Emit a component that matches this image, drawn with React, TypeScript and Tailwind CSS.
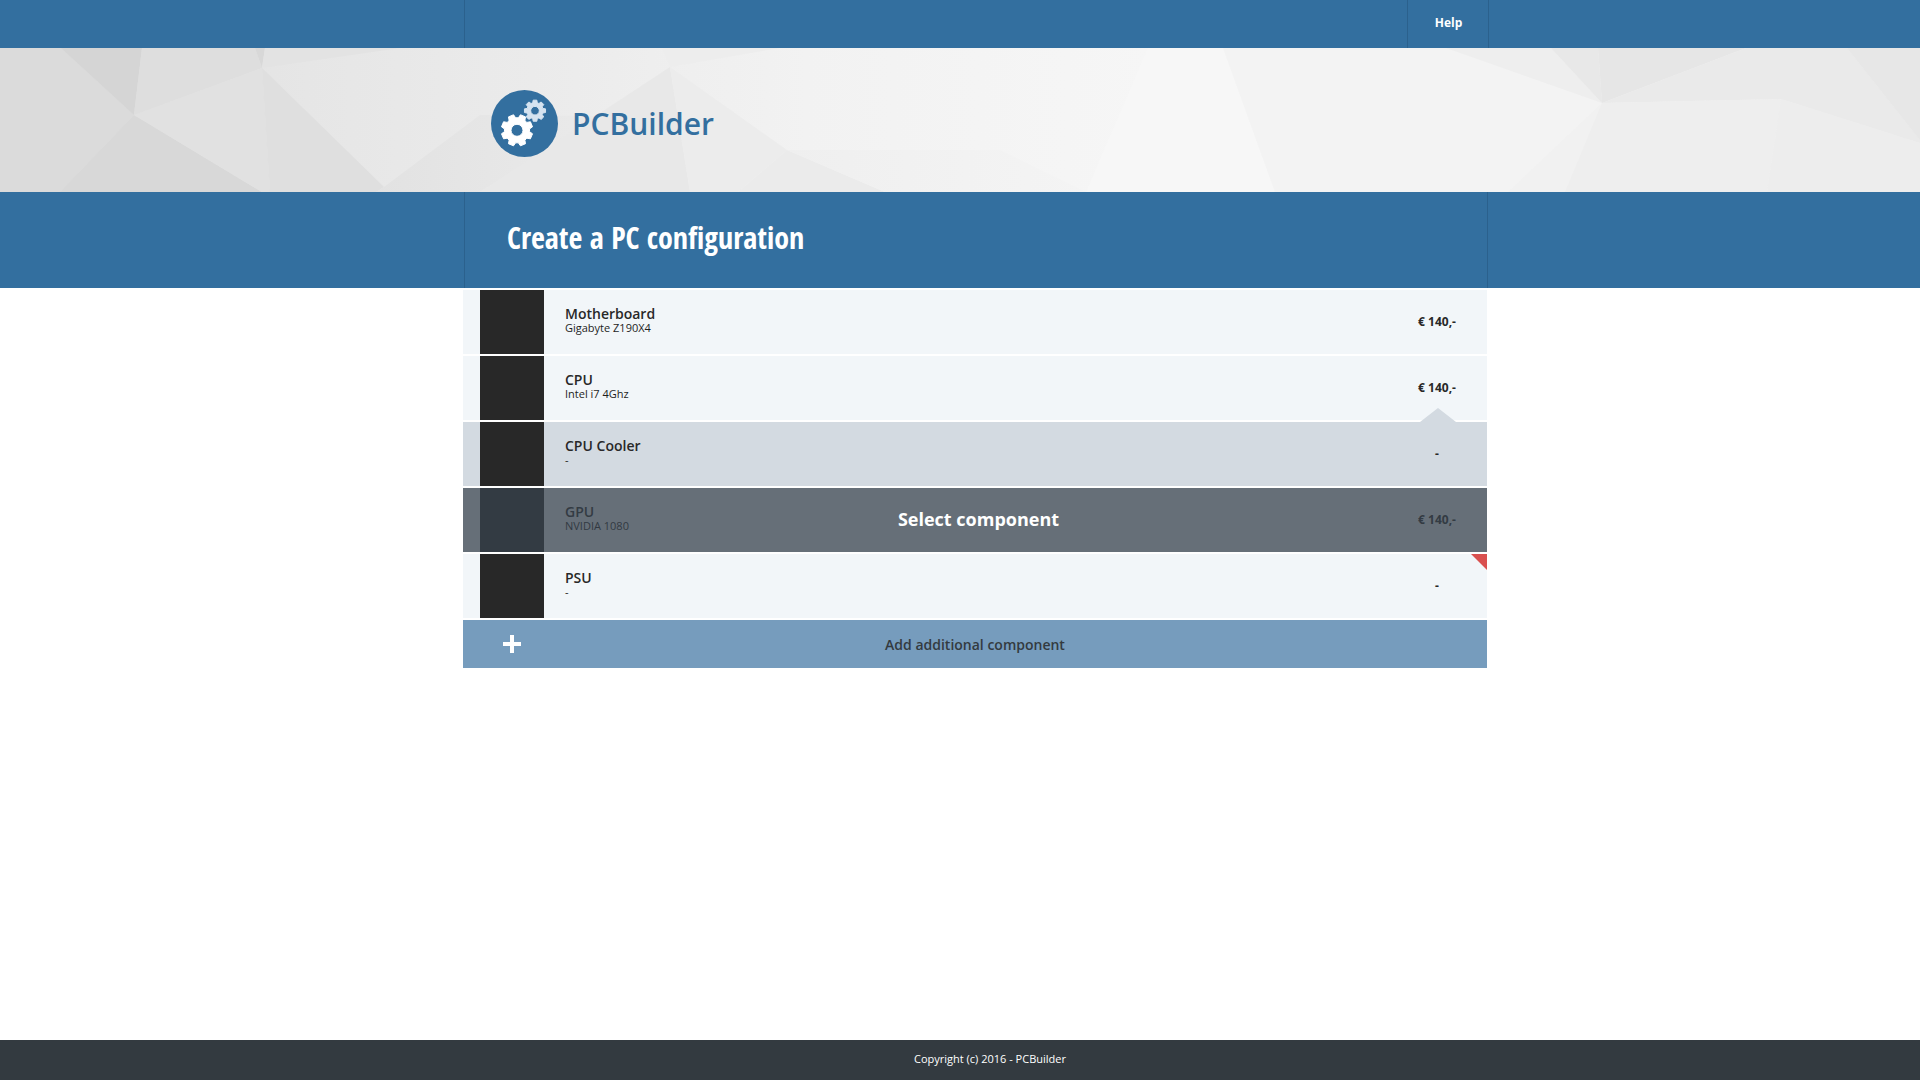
import React from "react";

type Facet = [points: string, fill: string];

const facets: Facet[] = [
  ["0,0 61,0 134,67 60,144 0,144", "#dbdbdb"],
  ["61,0 142,0 134,67", "#d5d5d5"],
  ["134,67 262,144 60,144", "#d8d8d8"],
  ["142,0 134,67 262,20 255,0", "#dedede"],
  ["134,67 262,20 270,144 262,144", "#e1e1e1"],
  ["262,20 384,139 376,144 270,144", "#dfdfdf"],
  ["255,0 265,0 262,20", "#d8d8d8"],
  ["265,0 262,20 400,0", "#e3e3e3"],
  ["384,139 480,67 600,68 480,144 376,144", "url(#slope)"],
  ["670,19 690,144 480,144", "#e8e8e8"],
  ["670,19 787,102 738,144 690,144", "#ececec"],
  ["662,0 670,19 780,0", "#ededed"],
  ["787,102 885,144 738,144", "#ebebeb"],
  ["787,102 1000,102 1086,144 885,144", "url(#floor)"],
  ["1148,0 1223,0 1275,144 1086,144", "#f7f7f7"],
  ["1223,0 1446,0 1602,55 1508,144 1275,144", "#f3f3f3"],
  ["1446,0 1551,0 1602,55", "#eeeeee"],
  ["1551,0 1598,0 1602,55", "#e8e8e8"],
  ["1598,0 1746,0 1602,55", "#e6e6e6"],
  ["1746,0 1847,0 1920,92 1920,95 1781,51 1602,55", "#eaeaea"],
  ["1847,0 1920,0 1920,92", "#e7e7e7"],
  ["1602,55 1565,144 1508,144", "#f1f1f1"],
  ["1602,55 1781,51 1767,144 1565,144", "#eeeeee"],
  ["1781,51 1920,95 1920,144 1767,144", "#ededed"],
];

function gearPath(cx: number, cy: number, outer: number, inner: number, hole: number, teeth: number, turn: number) {
  const step = (Math.PI * 2) / teeth;
  const at = (r: number, a: number) => `${(cx + r * Math.sin(a)).toFixed(2)} ${(cy - r * Math.cos(a)).toFixed(2)}`;
  const points: string[] = [];
  for (let i = 0; i < teeth; i++) {
    const a = i * step + turn;
    points.push(at(inner, a - step * 0.36), at(outer, a - step * 0.22), at(outer, a + step * 0.22), at(inner, a + step * 0.36));
  }
  return `M${points.join("L")}ZM${cx - hole} ${cy}a${hole} ${hole} 0 1 0 ${hole * 2} 0a${hole} ${hole} 0 1 0 ${-hole * 2} 0Z`;
}

function Logo() {
  return (
    <svg viewBox="0 0 67 67" className="size-[67px]" aria-hidden="true">
      <circle cx="33.5" cy="33.5" r="33.5" fill="#336f9f" />
      <g fillRule="evenodd" strokeLinejoin="round" strokeWidth="1">
        <path d={gearPath(26, 40.3, 15.9, 12.6, 6, 8, Math.PI / 8)} fill="#fff" stroke="#fff" />
        <path d={gearPath(44, 20.7, 10.7, 8.2, 4.3, 8, 0)} fill="#d5e3f0" stroke="#d5e3f0" />
      </g>
    </svg>
  );
}

function Banner() {
  return (
    <svg viewBox="0 0 1920 144" preserveAspectRatio="none" className="absolute inset-0 size-full" aria-hidden="true">
      <defs>
        <linearGradient id="base">
          <stop offset="0" stopColor="#dddddd" />
          <stop offset="0.16" stopColor="#e6e6e6" />
          <stop offset="0.3" stopColor="#ececec" />
          <stop offset="0.42" stopColor="#f2f2f2" />
          <stop offset="0.6" stopColor="#f6f6f6" />
          <stop offset="1" stopColor="#eeeeee" />
        </linearGradient>
        <linearGradient id="slope">
          <stop offset="0" stopColor="#e2e2e2" />
          <stop offset="1" stopColor="#eaeaea" />
        </linearGradient>
        <linearGradient id="floor">
          <stop offset="0" stopColor="#efefef" />
          <stop offset="1" stopColor="#f4f4f4" />
        </linearGradient>
      </defs>
      <rect width="1920" height="144" fill="url(#base)" />
      {facets.map(([points, fill]) => (
        <polygon key={points} points={points} fill={fill} />
      ))}
    </svg>
  );
}

type Component = { name: string; model: string; price: string; state?: "active" | "select" | "missing" };

const components: Component[] = [
  { name: "Motherboard", model: "Gigabyte Z190X4", price: "€ 140,-" },
  { name: "CPU", model: "Intel i7 4Ghz", price: "€ 140,-" },
  { name: "CPU Cooler", model: "-", price: "-", state: "active" },
  { name: "GPU", model: "NVIDIA 1080", price: "€ 140,-", state: "select" },
  { name: "PSU", model: "-", price: "-", state: "missing" },
];

function Row({ name, model, price, state }: Component) {
  return (
    <li className={`relative flex h-16 items-center pl-[17px] text-[#282828] ${state === "active" ? "bg-[#d3dae1]" : "bg-[#f2f6f9]"}`}>
      <div className="size-16 bg-[#282828]" />
      <div className="ml-[21px] flex-1 pb-1">
        <h2 className="text-[14px] leading-4 font-semibold">{name}</h2>
        <p className="text-[11px] leading-3 text-[#1e1e1e]">{model}</p>
      </div>
      <p className="w-[100px] text-center text-[12px] leading-4 font-bold">{price}</p>
      {state === "active" && (
        <svg viewBox="0 0 36 14" className="absolute right-[31px] bottom-full h-[14px] w-9" aria-hidden="true">
          <path d="M0 14L18 0L36 14Z" fill="#d3dae1" />
        </svg>
      )}
      {state === "missing" && (
        <svg viewBox="0 0 16 16" className="absolute top-0 right-0 size-4" aria-hidden="true">
          <path d="M0 0H16V16Z" fill="#d9504f" />
        </svg>
      )}
      {state === "select" && (
        <button type="button" className="absolute inset-0 bg-[#37414c]/75 pb-[2px] pl-[7px] text-[18px] leading-6 font-bold text-white">
          Select component
        </button>
      )}
    </li>
  );
}

export default function App() {
  return (
    <div className="flex min-h-screen flex-col bg-white font-['Open_Sans',sans-serif]">
      <nav className="bg-[#336f9f] pl-8">
        <div className="mx-auto flex h-12 max-w-[1025px] justify-end border-x border-[#2b618d]">
          <a href="#help" className="flex w-[81px] items-center justify-center border-l border-[#2b618d] pb-[2px] pl-[2px] text-[12px] font-bold text-white">
            Help
          </a>
        </div>
      </nav>
      <header className="relative pl-[30px]">
        <Banner />
        <div className="relative mx-auto flex h-36 max-w-[1024px] items-center gap-[14px] pt-[7px] pl-7">
          <Logo />
          <span className="text-[30px] leading-10 font-semibold text-[#336f9f]">PCBuilder</span>
        </div>
      </header>
      <div className="bg-[#336f9f] pl-8">
        <div className="mx-auto flex h-24 max-w-[1024px] items-center border-x border-[#2b618d] pb-[5px] pl-[42px]">
          <h1 className="font-['Open_Sans_Condensed','Open_Sans',sans-serif] text-[30px] leading-10 font-bold text-white">Create a PC configuration</h1>
        </div>
      </div>
      <main className="flex-1 pt-[2px] pl-[30px]">
        <div className="mx-auto max-w-[1024px]">
          <ul className="flex flex-col gap-[2px]">
            {components.map((component) => (
              <Row key={component.name} {...component} />
            ))}
          </ul>
          <button type="button" className="relative mt-[2px] flex h-12 w-full items-center justify-center bg-[#769cbd] text-[14px] font-semibold text-[#333a40]">
            <svg viewBox="0 0 18 18" className="absolute left-10 size-[18px]" aria-hidden="true">
              <path d="M7 0H11V7H18V11H11V18H7V11H0V7H7Z" fill="#fff" />
            </svg>
            Add additional component
          </button>
        </div>
      </main>
      <footer className="flex h-10 items-center justify-center bg-[#333a40] pb-[2px] pl-[60px] text-[11px] text-white">
        Copyright (c) 2016 - PCBuilder
      </footer>
    </div>
  );
}
